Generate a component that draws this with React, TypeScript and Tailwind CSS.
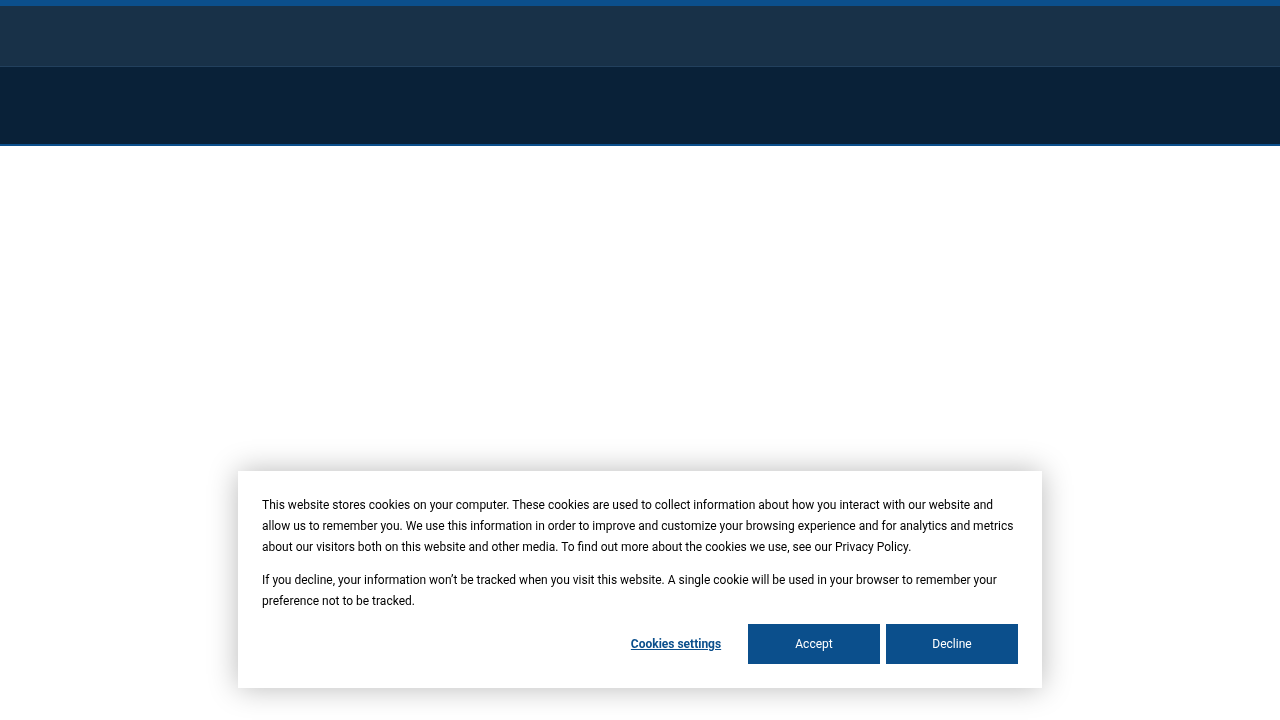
import React from 'react';

// Site chrome: thin brand stripe, utility bar, main nav bar
const Header: React.FC = () => (
  <header className="w-full">
    <div className="h-[6px] bg-[#0b4f8c]" />
    <div className="h-[61px] bg-[#183148] border-b border-[#22405d]" />
    <div className="h-[79px] bg-[#092138] border-b-2 border-[#0b4f8c]" />
  </header>
);

const CookieBanner: React.FC = () => (
  <div className="fixed left-[238px] top-[471px] w-[804px] bg-white px-6 pt-6 pb-6 shadow-[0_0_28px_rgba(0,0,0,0.28)] text-[12px] leading-[21px] text-black">
    <p>
      This website stores cookies on your computer. These cookies are used to collect information about how you
      interact with our website and allow us to remember you. We use this information in order to improve and
      customize your browsing experience and for analytics and metrics about our visitors both on this website and
      other media. To find out more about the cookies we use, see our Privacy Policy.
    </p>
    <p className="mt-3">
      If you decline, your information won’t be tracked when you visit this website. A single cookie will be used in
      your browser to remember your preference not to be tracked.
    </p>
    <div className="mt-3 flex justify-end gap-[6px]">
      <button className="w-[132px] h-10 font-bold text-[#0b4f8c] underline">Cookies settings</button>
      <button className="w-[132px] h-10 bg-[#0b4f8c] text-white">Accept</button>
      <button className="w-[132px] h-10 bg-[#0b4f8c] text-white">Decline</button>
    </div>
  </div>
);

export default function App() {
  return (
    <div className="min-h-[720px] bg-white" style={{ fontFamily: 'Roboto, "Liberation Sans", sans-serif' }}>
      <Header />
      <CookieBanner />
    </div>
  );
}
